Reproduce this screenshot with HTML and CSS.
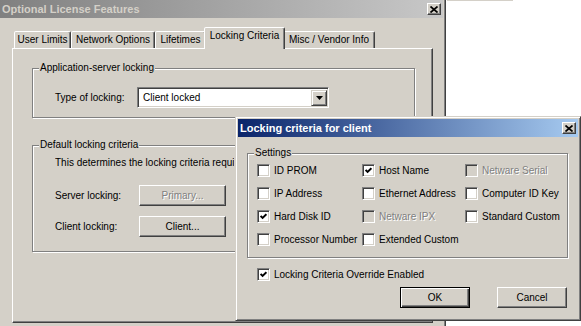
FILE: index.html
```html
<!DOCTYPE html>
<html>
<head>
<meta charset="utf-8">
<title>Optional License Features</title>
<link rel="stylesheet" href="styles.css">
</head>
<body>
<div class="desktop">
  <div class="edge"></div>

  <div class="window win-main">
    <div class="titlebar inactive">
      <span class="title">Optional License Features</span>
      <span class="close"><svg width="8" height="7" viewBox="0 0 8 7"><path d="M0.5 0.5 L7.5 6.5 M7.5 0.5 L0.5 6.5" stroke="#000" stroke-width="1.7"/></svg></span>
    </div>
    <div class="main-body">
      <div class="tabstrip">
        <div class="tab t-user">User Limits</div>
        <div class="tab t-net">Network Options</div>
        <div class="tab t-life">Lifetimes</div>
        <div class="tab tab-sel t-lock">Locking Criteria</div>
        <div class="tab t-misc">Misc / Vendor Info</div>
      </div>
      <div class="panel">
        <fieldset class="group group-app">
          <legend>Application-server locking</legend>
          <div class="field-row row-type">
            <span class="field-label">Type of locking:</span>
            <div class="combo">
              <span class="combo-text">Client locked</span>
              <span class="combo-btn"><svg width="7" height="4" viewBox="0 0 7 4"><path d="M0 0 H7 L3.5 4 Z" fill="#000"/></svg></span>
            </div>
          </div>
        </fieldset>
        <fieldset class="group group-default">
          <legend>Default locking criteria</legend>
          <p class="desc">This determines the locking criteria require</p>
          <div class="field-row row-server">
            <span class="field-label">Server locking:</span>
            <button class="btn btn-wide btn-disabled" type="button">Primary...</button>
          </div>
          <div class="field-row row-client">
            <span class="field-label">Client locking:</span>
            <button class="btn btn-wide" type="button">Client...</button>
          </div>
        </fieldset>
      </div>
    </div>
  </div>

  <div class="window win-dialog">
    <div class="titlebar active">
      <span class="title">Locking criteria for client</span>
      <span class="close"><svg width="8" height="7" viewBox="0 0 8 7"><path d="M0.5 0.5 L7.5 6.5 M7.5 0.5 L0.5 6.5" stroke="#000" stroke-width="1.7"/></svg></span>
    </div>
    <div class="dlg-body">
      <fieldset class="group group-settings">
        <legend>Settings</legend>
        <div class="cb-grid">
          <label class="cb-item"><span class="cb"></span>ID PROM</label>
          <label class="cb-item"><span class="cb"><svg width="7" height="7" viewBox="0 0 7 7"><path d="M0.6 3 L2.6 5 L6.4 1.2" fill="none" stroke="#000" stroke-width="1.9"/></svg></span>Host Name</label>
          <label class="cb-item disabled"><span class="cb"></span>Netware Serial</label>

          <label class="cb-item"><span class="cb"></span>IP Address</label>
          <label class="cb-item"><span class="cb"></span>Ethernet Address</label>
          <label class="cb-item"><span class="cb"></span>Computer ID Key</label>

          <label class="cb-item"><span class="cb"><svg width="7" height="7" viewBox="0 0 7 7"><path d="M0.6 3 L2.6 5 L6.4 1.2" fill="none" stroke="#000" stroke-width="1.9"/></svg></span>Hard Disk ID</label>
          <label class="cb-item disabled"><span class="cb"></span>Netware IPX</label>
          <label class="cb-item"><span class="cb"></span>Standard Custom</label>

          <label class="cb-item"><span class="cb"></span>Processor Number</label>
          <label class="cb-item"><span class="cb"></span>Extended Custom</label>
        </div>
      </fieldset>
      <label class="cb-item override"><span class="cb"><svg width="7" height="7" viewBox="0 0 7 7"><path d="M0.6 3 L2.6 5 L6.4 1.2" fill="none" stroke="#000" stroke-width="1.9"/></svg></span>Locking Criteria Override Enabled</label>
      <div class="dlg-buttons">
        <button class="btn btn-dlg btn-default" type="button">OK</button>
        <button class="btn btn-dlg" type="button">Cancel</button>
      </div>
    </div>
  </div>
</div>
</body>
</html>
```

FILE: styles.css
```css
* { box-sizing: border-box; }

html, body {
  margin: 0;
  padding: 0;
}

body {
  background: #fff;
  font-family: "Liberation Sans", Arial, sans-serif;
  font-size: 10px;
  color: #000;
}

.desktop {
  position: relative;
  width: 581px;
  height: 326px;
  overflow: hidden;
  background: #fff;
}

.edge {
  position: absolute;
  left: 447px;
  top: 0;
  width: 66px;
  height: 1px;
  background: #d4d0c8;
}

/* ---------- windows ---------- */
.window {
  position: absolute;
  display: flex;
  flex-direction: column;
  background: #d4d0c8;
  border: 1px solid;
  border-color: #d4d0c8 #404040 #404040 #d4d0c8;
  box-shadow: inset 1px 1px #fff, inset -1px -1px #808080;
  padding: 2px;
}

.win-main {
  left: -3px;
  top: -3px;
  width: 449px;
  height: 345px;
}

.win-dialog {
  left: 235px;
  top: 116px;
  width: 346px;
  height: 205px;
  z-index: 2;
}

.titlebar {
  height: 18px;
  flex: none;
  display: flex;
  align-items: center;
  justify-content: space-between;
  padding: 0 2px 0 2px;
}

.titlebar .title {
  font-size: 11px;
  font-weight: bold;
  white-space: nowrap;
}

.titlebar.inactive {
  background: linear-gradient(to right, #808080, #c8c8c8);
  color: #d4d0c8;
}

.titlebar.active {
  background: linear-gradient(to right, #0a246a, #a6caf0);
  color: #fff;
}

.close {
  width: 14px;
  height: 12px;
  display: flex;
  align-items: center;
  justify-content: center;
  background: #d4d0c8;
  border: 1px solid;
  border-color: #fff #404040 #404040 #fff;
  box-shadow: inset -1px -1px #808080;
}

/* ---------- main window body ---------- */
.main-body {
  padding-top: 9px;
}

.tabstrip {
  display: flex;
  align-items: flex-end;
  height: 21px;
  margin-left: 14px;
}

.tab {
  height: 17px;
  border: 1px solid;
  border-bottom: none;
  border-color: #fff #404040 transparent #fff;
  border-radius: 2px 2px 0 0;
  box-shadow: inset -1px 0 #808080;
  text-align: center;
  line-height: 16px;
  white-space: nowrap;
  background: #d4d0c8;
}

.t-user { width: 57px; }
.t-net  { width: 84px; }
.t-life { width: 51px; }
.t-lock { width: 81px; }
.t-misc { width: 92px; }

.tab-sel {
  position: relative;
  z-index: 1;
  height: 22px;
  margin: 0 -2px -1px -2px;
  line-height: 15px;
}

.panel {
  margin-left: 12px;
  width: 421px;
  height: 275px;
  border: 1px solid;
  border-color: #fff #404040 #404040 #fff;
  box-shadow: inset -1px -1px #808080;
  padding: 13px 17px 0 19px;
}

/* ---------- group boxes ---------- */
.group {
  margin: 0;
  padding: 0;
  min-width: 0;
  border: 1px solid #808080;
  box-shadow: inset 1px 1px #fff, 1px 1px #fff;
}

.group legend {
  padding: 0 1px;
  margin-left: 6px;
  line-height: 12px;
  height: 12px;
  background: #d4d0c8;
}

.group-app {
  height: 56px;
}

.group-default {
  margin-top: 21px;
  height: 113px;
}

.field-row {
  display: flex;
  align-items: center;
  padding-left: 22px;
  white-space: nowrap;
}

.field-label {
  flex: none;
}

.row-type {
  margin-top: 13px;
}

.row-type .field-label {
  width: 82px;
}

.row-server .field-label,
.row-client .field-label {
  width: 84px;
}

.desc {
  margin: 6px 0 0 22px;
  width: 179px;
  overflow: hidden;
  line-height: 12px;
  white-space: nowrap;
}

.row-server {
  margin-top: 16px;
}

.row-client {
  margin-top: 10px;
}

/* ---------- combo ---------- */
.combo {
  width: 192px;
  height: 21px;
  display: flex;
  background: #fff;
  border: 1px solid;
  border-color: #808080 #fff #fff #808080;
  box-shadow: inset 1px 1px #404040, inset -1px -1px #d4d0c8;
  padding: 2px 1px 1px 2px;
}

.combo-text {
  flex: 1;
  padding-left: 3px;
  line-height: 16px;
}

.combo-btn {
  width: 16px;
  height: 16px;
  display: flex;
  align-items: center;
  justify-content: center;
  background: #d4d0c8;
  border: 1px solid;
  border-color: #d4d0c8 #404040 #404040 #d4d0c8;
  box-shadow: inset 1px 1px #fff, inset -1px -1px #808080;
}

/* ---------- buttons ---------- */
.btn {
  font: inherit;
  color: #000;
  height: 21px;
  padding: 0;
  background: #d4d0c8;
  border: 1px solid;
  border-color: #fff #404040 #404040 #fff;
  box-shadow: inset -1px -1px #808080;
  border-radius: 0;
}

.btn-wide {
  width: 87px;
}

.btn-disabled {
  color: #808080;
  text-shadow: 1px 1px #fff;
}

.btn-dlg {
  width: 70px;
}

.btn-default {
  border-color: #000;
  box-shadow: inset 1px 1px #fff, inset -1px -1px #404040, inset -2px -2px #808080;
}

/* ---------- dialog body ---------- */
.dlg-body {
  display: flex;
  flex-direction: column;
  padding: 10px 0 0 9px;
}

.group-settings {
  width: 321px;
  height: 111px;
}

.cb-grid {
  display: grid;
  grid-template-columns: 105px 103px 1fr;
  row-gap: 10px;
  padding: 5px 0 0 9px;
}

.cb-item {
  display: flex;
  align-items: center;
  height: 13px;
  line-height: 13px;
  white-space: nowrap;
}

.cb {
  width: 13px;
  height: 13px;
  flex: none;
  margin-right: 4px;
  display: flex;
  align-items: center;
  justify-content: center;
  background: #fff;
  border: 1px solid;
  border-color: #808080 #fff #fff #808080;
  box-shadow: inset 1px 1px #404040, inset -1px -1px #d4d0c8;
}

.cb-item.disabled {
  color: #808080;
  text-shadow: 1px 1px #fff;
}

.cb-item.disabled .cb {
  background: #d4d0c8;
}

.override {
  margin: 10px 0 0 10px;
}

.dlg-buttons {
  display: flex;
  justify-content: flex-end;
  gap: 27px;
  margin-top: 6px;
  padding-right: 11px;
}
```
